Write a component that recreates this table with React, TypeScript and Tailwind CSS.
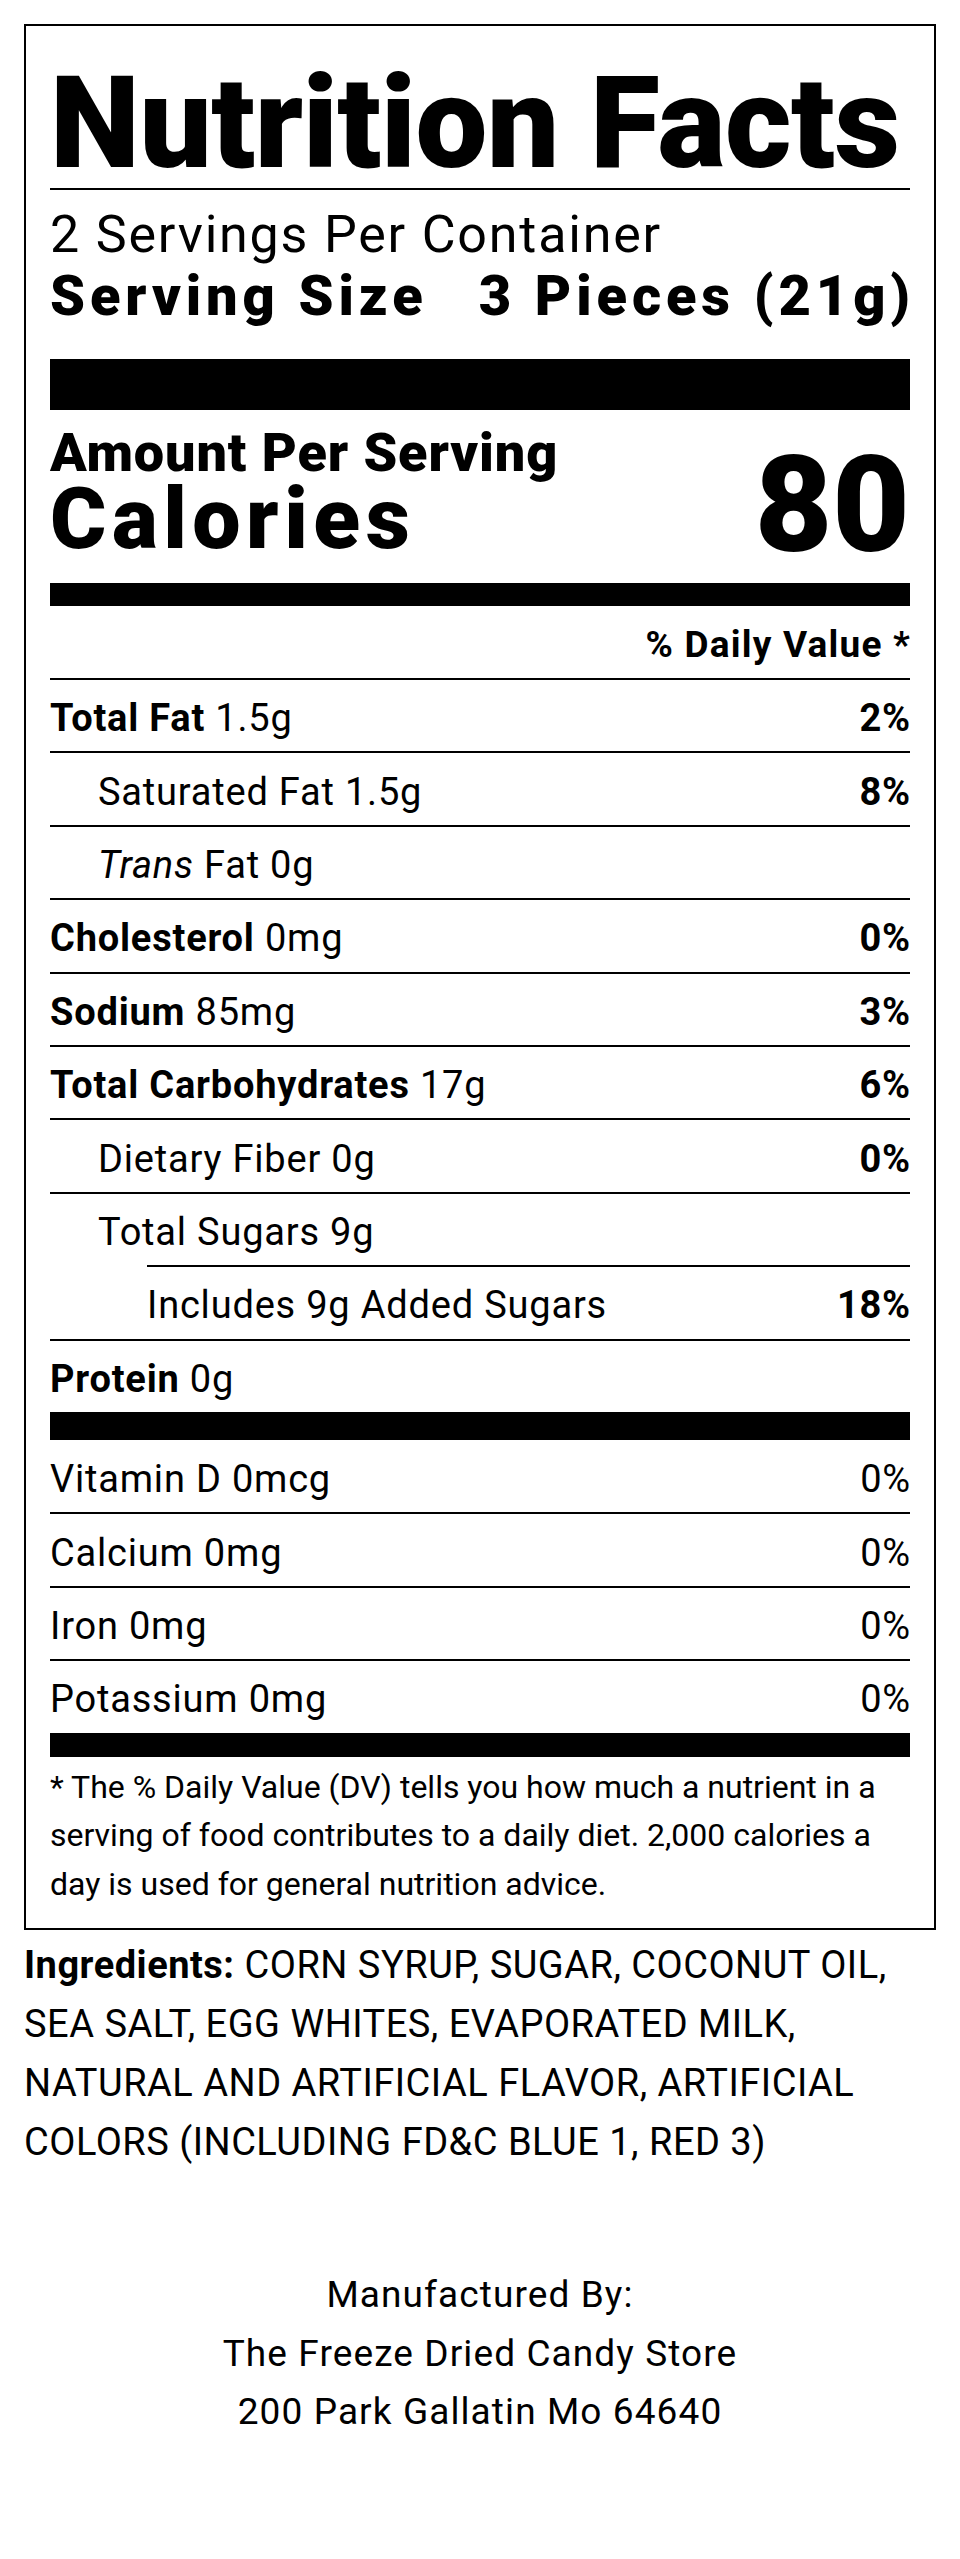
import React from 'react';

type RowProps = {
    children: React.ReactNode;
    dv?: string;
    dvBold?: boolean;
    indent?: boolean;
    className?: string;
};

const Row: React.FC<RowProps> = ({ children, dv, dvBold = true, indent = false, className = '' }) => (
    <div className={`flex h-[73.4px] items-center justify-between border-t-2 border-black pt-[6px] ${indent ? 'pl-[48px]' : ''} ${className}`}>
        <span>{children}</span>
        {dv && <span className={`-mr-[1px] ${dvBold ? 'font-bold' : ''}`}>{dv}</span>}
    </div>
);

export default function App() {
    return (
        <div className="min-h-[2559px] bg-white p-6 text-black [font-family:Roboto,sans-serif]">
            {/* Label */}
            <div className="border-2 border-black px-6 pt-[33px] pb-[20px]">
                <div className="border-b-2 border-black pb-[1px] text-[128px] leading-none font-black tracking-[-0.5px]">
                    Nutrition Facts
                </div>
                <div className="pt-[15px] text-[52px] leading-[60px] tracking-[1.8px]">2 Servings Per Container</div>
                <div className="mt-[1px] flex justify-between text-[56px] leading-[60px] font-black tracking-[4.9px]">
                    <span>Serving Size</span>
                    <span className="-mr-[5px]">3 Pieces (21g)</span>
                </div>
                <div className="mt-[33px] h-[51px] bg-black" />

                <div className="flex items-end justify-between pt-[15px] font-black">
                    <div>
                        <div className="text-[54px] leading-[56px] tracking-[0.9px]">Amount Per Serving</div>
                        <div className="text-[86px] leading-[76px] tracking-[5.5px]">Calories</div>
                    </div>
                    <div className="text-[134px] leading-[102px]">80</div>
                </div>
                <div className="mt-[26px] h-[23px] bg-black" />

                <div className="text-[38px] tracking-[0.8px]">
                    <div className="pt-[6px] text-right text-[37px] leading-[66px] font-bold tracking-[1.2px]">
                        <span className="-mr-[1px]">% Daily Value *</span>
                    </div>
                    <Row dv="2%">
                        <b>Total Fat</b> 1.5g
                    </Row>
                    <Row dv="8%" indent>
                        Saturated Fat 1.5g
                    </Row>
                    <Row indent>
                        <i>Trans</i> Fat 0g
                    </Row>
                    <Row dv="0%">
                        <b>Cholesterol</b> 0mg
                    </Row>
                    <Row dv="3%">
                        <b>Sodium</b> 85mg
                    </Row>
                    <Row dv="6%">
                        <b>Total Carbohydrates</b> 17g
                    </Row>
                    <Row dv="0%" indent>
                        Dietary Fiber 0g
                    </Row>
                    <Row indent>Total Sugars 9g</Row>
                    <Row dv="18%" className="ml-[97px]">
                        Includes 9g Added Sugars
                    </Row>
                    <Row>
                        <b>Protein</b> 0g
                    </Row>
                    <div className="h-[26px] bg-black" />
                    <Row dv="0%" dvBold={false} className="h-[74.5px]">
                        Vitamin D 0mcg
                    </Row>
                    <Row dv="0%" dvBold={false}>
                        Calcium 0mg
                    </Row>
                    <Row dv="0%" dvBold={false}>
                        Iron 0mg
                    </Row>
                    <Row dv="0%" dvBold={false}>
                        Potassium 0mg
                    </Row>
                    <div className="h-[24px] bg-black" />
                </div>

                <p className="pt-[6px] text-[32px] leading-[48.5px]">
                    * The % Daily Value (DV) tells you how much a nutrient in a serving of food contributes to a daily
                    diet. 2,000 calories a day is used for general nutrition advice.
                </p>
            </div>

            {/* Ingredients */}
            <p className="mt-[5.5px] text-[38px] leading-[59px] tracking-[0.5px]">
                <b>Ingredients:</b> CORN SYRUP, SUGAR, COCONUT OIL, SEA SALT, EGG WHITES, EVAPORATED MILK, NATURAL AND
                ARTIFICIAL FLAVOR, ARTIFICIAL COLORS (INCLUDING FD&amp;C BLUE 1, RED 3)
            </p>

            {/* Manufacturer */}
            <div className="mt-[94.5px] text-center text-[37px] leading-[58.5px] tracking-[1.1px]">
                <div>Manufactured By:</div>
                <div>The Freeze Dried Candy Store</div>
                <div>200 Park Gallatin Mo 64640</div>
            </div>
        </div>
    );
}
